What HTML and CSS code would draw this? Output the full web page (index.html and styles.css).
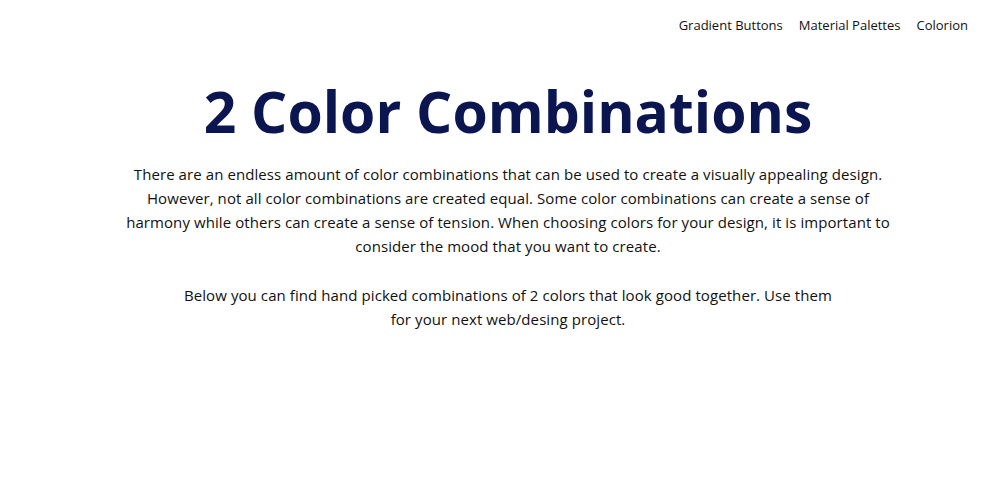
FILE: index.html
```html
<!DOCTYPE html>
<html lang="en">

<head>
    <meta charset="UTF-8">
    <meta name="viewport" content="width=device-width, initial-scale=1.0">
    <title>2 Color Combinations</title>
    <link rel="stylesheet" href="styles.css">
</head>

<body>

    <nav class="top-nav">
        <a href="#">Gradient Buttons</a>
        <a href="#">Material Palettes</a>
        <a href="#">Colorion</a>
    </nav>

    <header class="intro">
        <h1>2 Color Combinations</h1>
        <p class="lead">There are an endless amount of color combinations that can be used to create a visually
            appealing design. However, not all color combinations are created equal. Some color combinations can
            create a sense of harmony while others can create a sense of tension. When choosing colors for your
            design, it is important to consider the mood that you want to create.</p>
        <p class="lead narrow">Below you can find hand picked combinations of 2 colors that look good together. Use
            them for your next web/desing project.</p>
    </header>

</body>

</html>
```

FILE: styles.css
```css
body {
    margin: 0;
    background: #fff;
    color: #111;
    font-family: "Open Sans", "Noto Sans", sans-serif;
}

.top-nav {
    display: flex;
    justify-content: flex-end;
    gap: 16px;
    padding: 15px 32px 0 0;
    font-size: 13px;
    line-height: 20px;
}

.top-nav a {
    color: #111;
    text-decoration: none;
}

.intro {
    max-width: 780px;
    margin: 0 auto;
    padding-left: 16px;
    text-align: center;
}

.intro h1 {
    margin: 36px 0 11px;
    font-size: 57px;
    line-height: 80px;
    font-weight: 700;
    color: #0b1651;
}

.lead {
    margin: 0 0 25px;
    font-size: 15px;
    line-height: 24px;
    letter-spacing: 0.08px;
}

.lead.narrow {
    max-width: 670px;
    margin: 0 auto;
}
```
